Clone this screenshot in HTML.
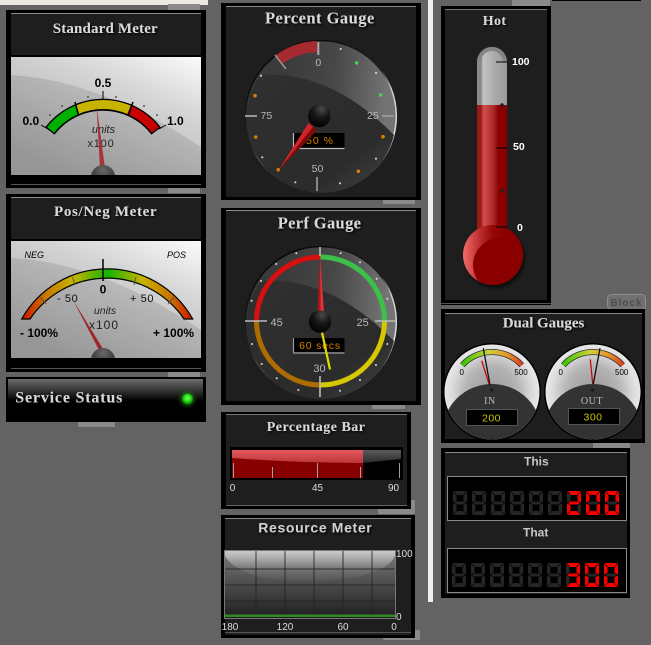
<!DOCTYPE html>
<html><head><meta charset="utf-8"><title>Gauges</title>
<style>
html,body{margin:0;padding:0;background:#636363;width:651px;height:645px;overflow:hidden}
svg{display:block}
.t{font-family:"Liberation Serif",serif;font-weight:bold;fill:#d8d8d8;filter:url(#sh)}
.a{font-family:"Liberation Sans",sans-serif}
.b{font-family:"Liberation Sans",sans-serif;font-weight:bold}
</style></head><body>
<svg width="651" height="645" viewBox="0 0 651 645" xmlns="http://www.w3.org/2000/svg">
<defs>
<filter id="sh" x="-10%" y="-30%" width="125%" height="180%"><feDropShadow dx="1.5" dy="1.5" stdDeviation="1" flood-color="#000" flood-opacity=".9"/></filter>
<filter id="bl" x="-30%" y="-30%" width="160%" height="160%"><feGaussianBlur stdDeviation="1.5"/></filter>
<linearGradient id="mbg" x1="1" y1="0" x2="0.3" y2="1"><stop offset="0" stop-color="#fbfbfb"/><stop offset=".35" stop-color="#d6d6d6"/><stop offset="1" stop-color="#a8a8a8"/></linearGradient>
<linearGradient id="pn" gradientUnits="userSpaceOnUse" x1="22" y1="0" x2="193" y2="0"><stop offset="0" stop-color="#cc1500"/><stop offset=".14" stop-color="#c87800"/><stop offset=".3" stop-color="#c8b400"/><stop offset=".5" stop-color="#10b400"/><stop offset=".7" stop-color="#c8b400"/><stop offset=".86" stop-color="#c87800"/><stop offset="1" stop-color="#cc1500"/></linearGradient>
<radialGradient id="dome" cx=".5" cy=".2" r=".7"><stop offset="0" stop-color="#666"/><stop offset="1" stop-color="#2c2c2c"/></radialGradient>
<linearGradient id="dial" x1=".95" y1=".25" x2=".25" y2=".2"><stop offset="0" stop-color="#747474"/><stop offset=".5" stop-color="#484848"/><stop offset="1" stop-color="#3a3a3a"/></linearGradient>
<linearGradient id="shade" x1="0" y1="0" x2="1" y2="1"><stop offset="0" stop-color="#303030"/><stop offset=".7" stop-color="#2b2b2b"/><stop offset="1" stop-color="#444"/></linearGradient>
<radialGradient id="knob" cx=".6" cy=".2" r=".85"><stop offset="0" stop-color="#4a4a4a"/><stop offset=".45" stop-color="#161616"/><stop offset="1" stop-color="#000"/></radialGradient>
<linearGradient id="rim" x1=".1" y1="0" x2=".7" y2="1"><stop offset="0" stop-color="#000"/><stop offset=".5" stop-color="#222"/><stop offset=".62" stop-color="#ccc"/><stop offset="1" stop-color="#eee"/></linearGradient>
<linearGradient id="stat" x1="0" y1="0" x2="0" y2="1"><stop offset="0" stop-color="#6e6e6e"/><stop offset=".15" stop-color="#5c5c5c"/><stop offset="1" stop-color="#000"/></linearGradient>
<radialGradient id="led" cx=".5" cy=".42" r=".55"><stop offset="0" stop-color="#8dff70"/><stop offset=".55" stop-color="#22e012"/><stop offset="1" stop-color="#0c7a08"/></radialGradient>
<linearGradient id="barhi" x1="0" y1="0" x2="0" y2="1"><stop offset="0" stop-color="#e5595f"/><stop offset="1" stop-color="#bc363a"/></linearGradient>
<linearGradient id="barhd" x1="0" y1="0" x2="0" y2="1"><stop offset="0" stop-color="#5c5c5c"/><stop offset="1" stop-color="#2a2a2a"/></linearGradient>
<linearGradient id="chart" x1="0" y1="0" x2="0" y2="1"><stop offset="0" stop-color="#7c7c7c"/><stop offset=".5" stop-color="#4c4c4c"/><stop offset="1" stop-color="#202020"/></linearGradient>
<linearGradient id="sheen" x1="0" y1="0" x2="0" y2="1"><stop offset="0" stop-color="#fff" stop-opacity=".6"/><stop offset=".6" stop-color="#fff" stop-opacity=".12"/><stop offset="1" stop-color="#fff" stop-opacity=".02"/></linearGradient>
<linearGradient id="tgl" x1="0" y1="0" x2="1" y2="0"><stop offset="0" stop-color="#8a8a8a"/><stop offset=".14" stop-color="#8a8a8a"/><stop offset=".2" stop-color="#c4c4c4"/><stop offset=".6" stop-color="#aaa"/><stop offset="1" stop-color="#9a9a9a"/></linearGradient>
<linearGradient id="tred" x1="0" y1="0" x2="1" y2="0"><stop offset="0" stop-color="#951616"/><stop offset=".14" stop-color="#a01c1c"/><stop offset=".22" stop-color="#cf4f4f"/><stop offset=".55" stop-color="#ac2828"/><stop offset=".72" stop-color="#8a0000"/><stop offset="1" stop-color="#8a0000"/></linearGradient>
<linearGradient id="bulb" x1="0" y1=".3" x2=".7" y2=".3"><stop offset="0" stop-color="#f26a6a"/><stop offset=".35" stop-color="#c43636"/><stop offset=".7" stop-color="#960808"/><stop offset="1" stop-color="#8a0000"/></linearGradient>
<radialGradient id="dd" cx=".5" cy=".5" r=".5"><stop offset="0" stop-color="#9a9a9a"/><stop offset=".55" stop-color="#b4b4b4"/><stop offset=".85" stop-color="#dcdcdc"/><stop offset="1" stop-color="#e8e8e8"/></radialGradient>
<linearGradient id="db" x1="0" y1="0" x2="1" y2="0"><stop offset="0" stop-color="#36c800"/><stop offset=".45" stop-color="#cfd03a"/><stop offset=".75" stop-color="#e8982a"/><stop offset="1" stop-color="#d8401e"/></linearGradient>
<clipPath id="c1"><rect x="11" y="57" width="190" height="118"/></clipPath>
<clipPath id="c2"><rect x="11" y="241" width="190" height="117"/></clipPath>
<clipPath id="cd1"><circle cx="492" cy="392" r="47.5"/></clipPath>
<clipPath id="cd2"><circle cx="593" cy="392" r="47.5"/></clipPath>
<clipPath id="cb"><circle cx="493" cy="255" r="30"/></clipPath>
<clipPath id="cc"><rect x="225" y="551" width="170" height="66"/></clipPath>
</defs>

<rect width="651" height="645" fill="#636363"/>
<rect x="0" y="0" width="208" height="5" fill="#ece9e4"/>
<rect x="428" y="0" width="5" height="602" fill="#efeeea"/>
<rect x="552" y="0" width="89" height="1" fill="#000"/>

<!-- Block tabs -->
<g fill="#8a8a8a">
<rect x="168" y="4" width="32" height="8"/><rect x="168" y="186" width="32" height="7"/><rect x="168" y="368" width="32" height="9"/>
<rect x="78" y="420" width="37" height="7"/><rect x="383" y="198" width="32" height="6"/><rect x="372" y="403" width="33" height="6"/>
<rect x="378" y="500" width="37" height="14" rx="2"/><rect x="383" y="630" width="37" height="10" rx="2"/>
<rect x="512" y="0" width="38" height="6"/><rect x="593" y="441" width="37" height="7"/>
</g>
<rect x="607.5" y="294.5" width="38" height="15" rx="4" fill="#707070" stroke="#8e8e8e"/>
<text x="626.5" y="306" text-anchor="middle" class="b" font-size="10" letter-spacing="1" fill="#4c4c4c">Block</text>

<!-- Standard Meter -->
<rect x="6" y="10" width="200" height="178" fill="#000"/>
<rect x="11" y="13" width="190" height="42" fill="#1e1e1e"/>
<rect x="11" y="13" width="190" height="1" fill="#8a8a8a"/>
<rect x="11" y="184" width="190" height="1" fill="#555"/>
<text x="52.7" y="33" class="t" font-size="15" textLength="105">Standard Meter</text>
<g clip-path="url(#c1)">
<rect x="11" y="57" width="190" height="118" fill="url(#mbg)"/>
<path d="M11 75Q100 80 201 147V175H11Z" fill="#000" opacity=".1"/>
<g fill="none">
<path d="M49.8 131A67 67 0 0 1 156.2 131" stroke="#000" stroke-width="12"/>
<path d="M50.6 130A66.5 66.5 0 0 1 77 109.8" stroke="#00b000" stroke-width="9"/>
<path d="M77 109.8A66.5 66.5 0 0 1 129 109.8" stroke="#c8b400" stroke-width="9"/>
<path d="M129 109.8A66.5 66.5 0 0 1 155.4 130" stroke="#c80000" stroke-width="9"/>
<path d="M75 102L78.5 115M133 102L128.5 115" stroke="#000" stroke-width="1.5"/>
<path d="M103 91V100M41 125L48 129M166 125L159 129" stroke="#000" stroke-width="1"/>
</g>
<g fill="#555"><circle cx="50" cy="115" r="1"/><circle cx="62" cy="106" r="1"/><circle cx="88" cy="97" r="1"/><circle cx="116" cy="97" r="1"/><circle cx="144" cy="106" r="1"/><circle cx="157" cy="115" r="1"/></g>
<text x="103" y="87" text-anchor="middle" class="b" font-size="12" fill="#000">0.5</text>
<text x="22.5" y="125" class="b" font-size="12" fill="#000">0.0</text>
<text x="167" y="125" class="b" font-size="12" fill="#000">1.0</text>
<text x="103.5" y="133" text-anchor="middle" class="a" font-size="11" font-style="italic" fill="#222">units</text>
<text x="101" y="147" text-anchor="middle" class="a" font-size="11" letter-spacing=".8" fill="#222">x100</text>
<path d="M96.5 105L100 168H105Z" fill="#a8343a"/>
<circle cx="103" cy="177" r="12" fill="url(#dome)"/>
</g>

<!-- Pos/Neg Meter -->
<rect x="6" y="194" width="200" height="178" fill="#000"/>
<rect x="11" y="197" width="190" height="42" fill="#1e1e1e"/>
<rect x="11" y="197" width="190" height="1" fill="#8a8a8a"/>
<rect x="11" y="368" width="190" height="1" fill="#555"/>
<text x="54" y="216" class="t" font-size="15" textLength="102.7">Pos/Neg Meter</text>
<g clip-path="url(#c2)">
<rect x="11" y="241" width="190" height="117" fill="url(#mbg)"/>
<path d="M11 258Q100 262 201 330V358H11Z" fill="#000" opacity=".1"/>
<path d="M21.7 319A98 98 0 0 1 192.7 319L184 319A93 93 0 0 0 30 319Z" fill="url(#pn)" stroke="#000" stroke-width="1.2"/>
<path d="M103 259V281" stroke="#000" stroke-width="1.5"/>
<path d="M72.5 277L75 285M136 277L134 285M40 297L46 304M174 297L168 304" stroke="#555" stroke-width="1"/>
<text x="24.5" y="258" class="a" font-size="9" font-style="italic" fill="#000">NEG</text>
<text x="167" y="258" class="a" font-size="9" font-style="italic" fill="#000">POS</text>
<text x="103" y="293.5" text-anchor="middle" class="b" font-size="12" fill="#000">0</text>
<text x="57" y="302" class="a" font-size="11" letter-spacing=".6" fill="#111">- 50</text>
<text x="130" y="302" class="a" font-size="11" letter-spacing=".6" fill="#111">+ 50</text>
<text x="105" y="314" text-anchor="middle" class="a" font-size="10.5" font-style="italic" fill="#222">units</text>
<text x="104" y="329" text-anchor="middle" class="a" font-size="12" letter-spacing="1" fill="#222">x100</text>
<text x="20" y="337" class="b" font-size="12" fill="#000">- 100%</text>
<text x="153" y="337" class="b" font-size="12" fill="#000">+ 100%</text>
<path d="M73 300L99 350L102.5 348Z" fill="#a02428"/>
<circle cx="103" cy="360" r="12" fill="url(#dome)"/>
</g>

<!-- Service Status -->
<rect x="6" y="377" width="200" height="45" fill="#000"/>
<rect x="8" y="379" width="195" height="22" fill="url(#stat)"/>
<text x="15.3" y="402.7" class="t" font-size="16" textLength="107">Service Status</text>
<circle cx="187.5" cy="399" r="7.5" fill="#1c8a10" opacity=".55" filter="url(#bl)"/>
<circle cx="187.5" cy="399" r="5.5" fill="url(#led)"/>

<!-- Percent Gauge -->
<rect x="221" y="3" width="200" height="197" fill="#000"/>
<rect x="226" y="6" width="190" height="191" fill="#1e1e1e"/>
<rect x="226" y="6" width="190" height="1" fill="#8a8a8a"/>
<text x="265" y="23.3" class="t" font-size="16.5" textLength="109.3">Percent Gauge</text>
<circle cx="320.8" cy="116" r="75.5" fill="url(#dial)" stroke="url(#rim)" stroke-width="1.5"/>
<path d="M261 75Q330 70 394 135A75 75 0 0 1 246 116A75 75 0 0 1 261 75Z" fill="url(#shade)"/>
<path d="M279.1 59.4A69.5 69.5 0 0 1 317 46.5" fill="none" stroke="#a62a30" stroke-width="11"/>
<path d="M275 55L286 69" stroke="#999" stroke-width="1.5"/>
<path d="M318.3 42V55" stroke="#aaa" stroke-width="2"/>
<path d="M245 116H257M382 116H394" stroke="#999" stroke-width="2"/>
<path d="M317 177V191" stroke="#888" stroke-width="2"/>
<g fill="#ccc"><circle cx="340.7" cy="49" r="1.1"/><circle cx="376" cy="73" r="1.1"/><circle cx="376" cy="158.7" r="1.1"/><circle cx="340" cy="183.3" r="1.1"/><circle cx="295.3" cy="182.3" r="1.1"/><circle cx="262.3" cy="157.3" r="1.1"/><circle cx="261" cy="75.7" r="1.1"/></g>
<g fill="#44d84a"><circle cx="356.7" cy="63" r="1.7"/><circle cx="380.7" cy="95" r="1.7"/></g>
<g fill="#d88000"><circle cx="383" cy="136.7" r="1.8"/><circle cx="358.3" cy="171.3" r="1.8"/><circle cx="278.3" cy="169.7" r="1.8"/><circle cx="255.7" cy="137" r="1.8"/><circle cx="255" cy="95.7" r="1.8"/></g>
<text x="318.3" y="66" text-anchor="middle" class="a" font-size="10.5" fill="#b8b8b8">0</text>
<text x="260.5" y="119" class="a" font-size="10.5" fill="#b8b8b8">75</text>
<text x="367" y="119" class="a" font-size="10.5" fill="#b8b8b8">25</text>
<text x="317.5" y="172" text-anchor="middle" class="a" font-size="10.5" fill="#b8b8b8">50</text>
<rect x="293.5" y="133" width="51" height="15" fill="#000"/>
<path d="M293.5 133V148.5H344.5" fill="none" stroke="#bbb" stroke-width="1.2"/>
<text x="320" y="144" text-anchor="middle" class="a" font-size="10.5" letter-spacing="1" fill="#d88000">50 %</text>
<path d="M278 171L308.5 123L313 127Z" fill="#d42228"/>
<path d="M278 171L313 127L317.5 130Z" fill="#7a0c0c"/>
<circle cx="319.3" cy="116" r="11.2" fill="url(#knob)"/>

<!-- Perf Gauge -->
<rect x="221" y="208" width="200" height="197" fill="#000"/>
<rect x="226" y="210" width="190" height="191" fill="#1e1e1e"/>
<rect x="226" y="210" width="190" height="1" fill="#8a8a8a"/>
<text x="277.7" y="228.3" class="t" font-size="16.5" textLength="83.3">Perf Gauge</text>
<circle cx="320.8" cy="322" r="75.5" fill="url(#dial)" stroke="url(#rim)" stroke-width="1.5"/>
<path d="M261 281Q330 276 394 341A75 75 0 0 1 246 322A75 75 0 0 1 261 281Z" fill="url(#shade)"/>
<g fill="none" stroke-width="5">
<path d="M256.5 321A64 64 0 0 1 320.5 257" stroke="#d80f0f"/>
<path d="M320.5 257A64 64 0 0 1 384.5 321" stroke="#3dc04a"/>
<path d="M384.5 321A64 64 0 0 1 320.5 385" stroke="#d6c800"/>
<path d="M320.5 385A64 64 0 0 1 256.5 321" stroke="#ac6c00"/>
</g>
<path d="M245 321H267M375 321H396M320 247V256M320 376V397" stroke="#bbb" stroke-width="1.6"/>
<g fill="#ddd"><circle cx="296.3" cy="253.3" r="1"/><circle cx="276.3" cy="264" r="1"/><circle cx="261" cy="281" r="1"/><circle cx="251.7" cy="300.7" r="1"/><circle cx="252" cy="344" r="1"/><circle cx="261.7" cy="364" r="1"/><circle cx="276.7" cy="378.3" r="1"/><circle cx="298.3" cy="390" r="1"/><circle cx="340" cy="390.7" r="1"/><circle cx="360" cy="380" r="1"/><circle cx="376" cy="365" r="1"/><circle cx="387.3" cy="344" r="1"/><circle cx="387.3" cy="298.7" r="1"/><circle cx="376.7" cy="278.7" r="1"/><circle cx="360" cy="262.3" r="1"/><circle cx="340.7" cy="253.3" r="1"/></g>
<text x="270.5" y="326" class="a" font-size="11" fill="#b8b8b8">45</text>
<text x="356.5" y="326" class="a" font-size="11" fill="#b8b8b8">25</text>
<text x="319.5" y="372" text-anchor="middle" class="a" font-size="11" fill="#b8b8b8">30</text>
<rect x="293.5" y="338" width="51" height="14" fill="#000"/>
<path d="M293.5 338V353H344.5" fill="none" stroke="#999" stroke-width="1.2"/>
<text x="320" y="349" text-anchor="middle" class="a" font-size="10.5" letter-spacing=".8" fill="#d88000">60 secs</text>
<path d="M320 255L317.5 312H320.5Z" fill="#a81818"/>
<path d="M320 255L320.5 312H324Z" fill="#e03038"/>
<path d="M321.7 331L330 369.5" stroke="#dcdc00" stroke-width="2.2"/>
<circle cx="320" cy="321.7" r="11.2" fill="url(#knob)"/>

<!-- Percentage Bar -->
<rect x="221" y="412" width="190" height="97" fill="#000"/>
<rect x="226" y="414" width="181" height="91" fill="#1e1e1e"/>
<rect x="226" y="414" width="181" height="1" fill="#777"/>
<rect x="226" y="505" width="181" height="1" fill="#666"/>
<text x="266.7" y="431" class="t" font-size="14" textLength="98.3">Percentage Bar</text>
<rect x="230" y="447" width="173" height="33" fill="#000"/>
<rect x="232" y="450" width="131" height="28" fill="#860000"/>
<path d="M232 450H363V463Q300 463 232 458Z" fill="url(#barhi)"/>
<path d="M363 450H401V459Q380 461 363 463Z" fill="url(#barhd)"/>
<path d="M233.5 463V478M272.5 467V478M317.5 463V478M360.5 467V478M399.5 463V478" stroke="#a0a0a0" stroke-width="1"/>
<text x="232.5" y="491" text-anchor="middle" class="a" font-size="10" fill="#ddd">0</text>
<text x="317.5" y="491" text-anchor="middle" class="a" font-size="10" fill="#ddd">45</text>
<text x="393.5" y="491" text-anchor="middle" class="a" font-size="10" fill="#ddd">90</text>

<!-- Resource Meter -->
<rect x="221" y="515" width="194" height="123" fill="#000"/>
<rect x="225" y="518" width="186" height="117" fill="#1e1e1e"/>
<rect x="225" y="518" width="186" height="1" fill="#888"/>
<rect x="225" y="632" width="186" height="1" fill="#555"/>
<text x="258.3" y="532.7" class="b" font-size="14" fill="#cfcfcf" filter="url(#sh)" textLength="113.4">Resource Meter</text>
<rect x="224.5" y="550.5" width="171" height="68" fill="none" stroke="#777"/>
<g clip-path="url(#cc)">
<rect x="225" y="551" width="170" height="66" fill="url(#chart)"/>
<path d="M225 551H395V556Q388 572 345 579Q310 583 270 579Q234 572 225 556Z" fill="url(#sheen)"/>
<path d="M256 551V617M285 551V617M314 551V617M343 551V617M372 551V617M225 569H395M225 585H395M225 601H395" stroke="#222" stroke-width="1" opacity=".85"/>
<rect x="225" y="614.5" width="170" height="2.5" fill="#2f8a22"/>
</g>
<text x="396" y="557" class="a" font-size="10" fill="#ddd">100</text>
<text x="396" y="620" class="a" font-size="10" fill="#ddd">0</text>
<text x="230" y="630" text-anchor="middle" class="a" font-size="10" fill="#ddd">180</text>
<text x="285" y="630" text-anchor="middle" class="a" font-size="10" fill="#ddd">120</text>
<text x="343" y="630" text-anchor="middle" class="a" font-size="10" fill="#ddd">60</text>
<text x="394" y="630" text-anchor="middle" class="a" font-size="10" fill="#ddd">0</text>

<!-- Hot -->
<rect x="441" y="6" width="110" height="299" fill="#000"/>
<rect x="445" y="9" width="102" height="291" fill="#1e1e1e"/>
<rect x="445" y="9" width="102" height="1" fill="#777"/>
<rect x="441" y="303" width="110" height="1" fill="#555"/>
<text x="482.7" y="25" class="t" font-size="14" textLength="23.3">Hot</text>
<path d="M477 105V62A15 15 0 0 1 507 62V105Z" fill="url(#tgl)"/>
<path d="M477 62A15 15 0 0 1 507 62L503 62A11 11 0 0 0 481 62Z" fill="#858585"/>
<rect x="477" y="105" width="30" height="130" fill="url(#tred)"/>
<circle cx="495" cy="258" r="30" fill="#000" opacity=".6" filter="url(#bl)"/>
<circle cx="493" cy="255" r="30" fill="url(#bulb)"/>
<g clip-path="url(#cb)"><circle cx="500" cy="265" r="27" fill="#8a0000"/></g>
<path d="M496 62H507M496 148H507M496 227H507" stroke="#000" stroke-width="1"/>
<circle cx="502" cy="105" r="1.8" fill="#222"/><circle cx="502" cy="191" r="1.8" fill="#222"/>
<text x="512" y="65" class="b" font-size="10.5" fill="#fff">100</text>
<text x="513" y="150" class="b" font-size="10.5" fill="#fff">50</text>
<text x="517" y="231" class="b" font-size="10.5" fill="#fff">0</text>

<!-- Dual Gauges -->
<rect x="441" y="309" width="204" height="134" fill="#000"/>
<rect x="445" y="313" width="197" height="126" fill="#1e1e1e"/>
<rect x="445" y="313" width="197" height="1" fill="#888"/>
<text x="502.7" y="327.7" class="t" font-size="15" textLength="81.6">Dual Gauges</text>
<g>
<circle cx="492" cy="392" r="49" fill="#000"/>
<circle cx="492" cy="392" r="47.5" fill="url(#dd)"/>
<g clip-path="url(#cd1)"><circle cx="492" cy="434" r="50" fill="#333"/></g>
<path d="M462.3 365.2A40 40 0 0 1 521.7 365.2" fill="none" stroke="#333" stroke-width="6"/>
<path d="M462.3 365.2A40 40 0 0 1 521.7 365.2" fill="none" stroke="url(#db)" stroke-width="4.4"/>
<text x="461.7" y="375" text-anchor="middle" class="a" font-size="8" fill="#000">0</text>
<text x="521" y="375" text-anchor="middle" class="a" font-size="8" fill="#000">500</text>
<path d="M481.7 360.7L489.3 385" stroke="#c00" stroke-width="1.2"/>
<path d="M483.3 348.3L490 385" stroke="#111" stroke-width="1.3"/>
<circle cx="491.7" cy="390" r="1.6" fill="#1a1a1a"/>
<text x="490" y="404" text-anchor="middle" font-family="Liberation Serif,serif" font-size="10" letter-spacing=".6" fill="#bbb">IN</text>
<rect x="466.5" y="409.5" width="51" height="16" fill="#000" stroke="#555"/>
<text x="491.5" y="421.5" text-anchor="middle" class="a" font-size="10.5" letter-spacing=".5" fill="#c8c800">200</text>
</g>
<g>
<circle cx="593" cy="392" r="49" fill="#000"/>
<circle cx="593" cy="392" r="47.5" fill="url(#dd)"/>
<g clip-path="url(#cd2)"><circle cx="593" cy="434" r="50" fill="#333"/></g>
<path d="M563.3 365.2A40 40 0 0 1 622.7 365.2" fill="none" stroke="#333" stroke-width="6"/>
<path d="M563.3 365.2A40 40 0 0 1 622.7 365.2" fill="none" stroke="url(#db)" stroke-width="4.4"/>
<text x="560.7" y="375" text-anchor="middle" class="a" font-size="8" fill="#000">0</text>
<text x="621.7" y="375" text-anchor="middle" class="a" font-size="8" fill="#000">500</text>
<path d="M590.3 359.3L592.7 384" stroke="#c00" stroke-width="1.2"/>
<path d="M600 348.3L593.3 384" stroke="#111" stroke-width="1.3"/>
<circle cx="592.5" cy="390" r="1.6" fill="#1a1a1a"/>
<text x="592" y="404" text-anchor="middle" font-family="Liberation Serif,serif" font-size="10" letter-spacing=".6" fill="#bbb">OUT</text>
<rect x="568.5" y="408.5" width="51" height="16" fill="#000" stroke="#555"/>
<text x="593" y="420.5" text-anchor="middle" class="a" font-size="10.5" letter-spacing=".5" fill="#c8c800">300</text>
</g>

<!-- This / That -->
<rect x="441" y="448" width="189" height="150" fill="#000"/>
<rect x="445" y="452" width="182" height="142" fill="#1e1e1e"/>
<rect x="445" y="452" width="182" height="1" fill="#888"/>
<text x="524" y="465.7" class="b" font-size="12" fill="#c8c8c8">This</text>
<text x="523" y="536.7" class="b" font-size="12" fill="#c8c8c8">That</text>
<rect x="447.5" y="476.5" width="179" height="44" fill="#000" stroke="#888"/>
<rect x="447.5" y="548.5" width="179" height="44" fill="#000" stroke="#888"/>
<g fill="#262626">
<path transform="translate(453,491)" d="M.5 0H13.5L10 4H4ZM14 .5V11.5L10.5 10V4.5ZM14 12.5V23.5L10.5 20V14ZM13.5 24H.5L4 20H10ZM0 23.5V12.5L3.5 14V20ZM0 11.5V.5L3.5 4.5V10ZM1 12L3.5 10.5H10.5L13 12L10.5 13.5H3.5Z"/>
<path transform="translate(472,491)" d="M.5 0H13.5L10 4H4ZM14 .5V11.5L10.5 10V4.5ZM14 12.5V23.5L10.5 20V14ZM13.5 24H.5L4 20H10ZM0 23.5V12.5L3.5 14V20ZM0 11.5V.5L3.5 4.5V10ZM1 12L3.5 10.5H10.5L13 12L10.5 13.5H3.5Z"/>
<path transform="translate(491,491)" d="M.5 0H13.5L10 4H4ZM14 .5V11.5L10.5 10V4.5ZM14 12.5V23.5L10.5 20V14ZM13.5 24H.5L4 20H10ZM0 23.5V12.5L3.5 14V20ZM0 11.5V.5L3.5 4.5V10ZM1 12L3.5 10.5H10.5L13 12L10.5 13.5H3.5Z"/>
<path transform="translate(510,491)" d="M.5 0H13.5L10 4H4ZM14 .5V11.5L10.5 10V4.5ZM14 12.5V23.5L10.5 20V14ZM13.5 24H.5L4 20H10ZM0 23.5V12.5L3.5 14V20ZM0 11.5V.5L3.5 4.5V10ZM1 12L3.5 10.5H10.5L13 12L10.5 13.5H3.5Z"/>
<path transform="translate(529,491)" d="M.5 0H13.5L10 4H4ZM14 .5V11.5L10.5 10V4.5ZM14 12.5V23.5L10.5 20V14ZM13.5 24H.5L4 20H10ZM0 23.5V12.5L3.5 14V20ZM0 11.5V.5L3.5 4.5V10ZM1 12L3.5 10.5H10.5L13 12L10.5 13.5H3.5Z"/>
<path transform="translate(548,491)" d="M.5 0H13.5L10 4H4ZM14 .5V11.5L10.5 10V4.5ZM14 12.5V23.5L10.5 20V14ZM13.5 24H.5L4 20H10ZM0 23.5V12.5L3.5 14V20ZM0 11.5V.5L3.5 4.5V10ZM1 12L3.5 10.5H10.5L13 12L10.5 13.5H3.5Z"/>
<path transform="translate(567,491)" d="M14 12.5V23.5L10.5 20V14ZM0 11.5V.5L3.5 4.5V10Z"/>
<path transform="translate(586,491)" d="M1 12L3.5 10.5H10.5L13 12L10.5 13.5H3.5Z"/>
<path transform="translate(605,491)" d="M1 12L3.5 10.5H10.5L13 12L10.5 13.5H3.5Z"/>
<path transform="translate(452,563)" d="M.5 0H13.5L10 4H4ZM14 .5V11.5L10.5 10V4.5ZM14 12.5V23.5L10.5 20V14ZM13.5 24H.5L4 20H10ZM0 23.5V12.5L3.5 14V20ZM0 11.5V.5L3.5 4.5V10ZM1 12L3.5 10.5H10.5L13 12L10.5 13.5H3.5Z"/>
<path transform="translate(471,563)" d="M.5 0H13.5L10 4H4ZM14 .5V11.5L10.5 10V4.5ZM14 12.5V23.5L10.5 20V14ZM13.5 24H.5L4 20H10ZM0 23.5V12.5L3.5 14V20ZM0 11.5V.5L3.5 4.5V10ZM1 12L3.5 10.5H10.5L13 12L10.5 13.5H3.5Z"/>
<path transform="translate(490,563)" d="M.5 0H13.5L10 4H4ZM14 .5V11.5L10.5 10V4.5ZM14 12.5V23.5L10.5 20V14ZM13.5 24H.5L4 20H10ZM0 23.5V12.5L3.5 14V20ZM0 11.5V.5L3.5 4.5V10ZM1 12L3.5 10.5H10.5L13 12L10.5 13.5H3.5Z"/>
<path transform="translate(509,563)" d="M.5 0H13.5L10 4H4ZM14 .5V11.5L10.5 10V4.5ZM14 12.5V23.5L10.5 20V14ZM13.5 24H.5L4 20H10ZM0 23.5V12.5L3.5 14V20ZM0 11.5V.5L3.5 4.5V10ZM1 12L3.5 10.5H10.5L13 12L10.5 13.5H3.5Z"/>
<path transform="translate(528,563)" d="M.5 0H13.5L10 4H4ZM14 .5V11.5L10.5 10V4.5ZM14 12.5V23.5L10.5 20V14ZM13.5 24H.5L4 20H10ZM0 23.5V12.5L3.5 14V20ZM0 11.5V.5L3.5 4.5V10ZM1 12L3.5 10.5H10.5L13 12L10.5 13.5H3.5Z"/>
<path transform="translate(547,563)" d="M.5 0H13.5L10 4H4ZM14 .5V11.5L10.5 10V4.5ZM14 12.5V23.5L10.5 20V14ZM13.5 24H.5L4 20H10ZM0 23.5V12.5L3.5 14V20ZM0 11.5V.5L3.5 4.5V10ZM1 12L3.5 10.5H10.5L13 12L10.5 13.5H3.5Z"/>
<path transform="translate(566,563)" d="M0 23.5V12.5L3.5 14V20ZM0 11.5V.5L3.5 4.5V10Z"/>
<path transform="translate(585,563)" d="M1 12L3.5 10.5H10.5L13 12L10.5 13.5H3.5Z"/>
<path transform="translate(604,563)" d="M1 12L3.5 10.5H10.5L13 12L10.5 13.5H3.5Z"/>
</g>
<g fill="#f60000">
<g><title>200</title>
<path transform="translate(567,491)" d="M.5 0H13.5L10 4H4ZM14 .5V11.5L10.5 10V4.5ZM13.5 24H.5L4 20H10ZM0 23.5V12.5L3.5 14V20ZM1 12L3.5 10.5H10.5L13 12L10.5 13.5H3.5Z"/>
<path transform="translate(586,491)" d="M.5 0H13.5L10 4H4ZM14 .5V11.5L10.5 10V4.5ZM14 12.5V23.5L10.5 20V14ZM13.5 24H.5L4 20H10ZM0 23.5V12.5L3.5 14V20ZM0 11.5V.5L3.5 4.5V10Z"/>
<path transform="translate(605,491)" d="M.5 0H13.5L10 4H4ZM14 .5V11.5L10.5 10V4.5ZM14 12.5V23.5L10.5 20V14ZM13.5 24H.5L4 20H10ZM0 23.5V12.5L3.5 14V20ZM0 11.5V.5L3.5 4.5V10Z"/>
</g>
<g><title>300</title>
<path transform="translate(566,563)" d="M.5 0H13.5L10 4H4ZM14 .5V11.5L10.5 10V4.5ZM14 12.5V23.5L10.5 20V14ZM13.5 24H.5L4 20H10ZM1 12L3.5 10.5H10.5L13 12L10.5 13.5H3.5Z"/>
<path transform="translate(585,563)" d="M.5 0H13.5L10 4H4ZM14 .5V11.5L10.5 10V4.5ZM14 12.5V23.5L10.5 20V14ZM13.5 24H.5L4 20H10ZM0 23.5V12.5L3.5 14V20ZM0 11.5V.5L3.5 4.5V10Z"/>
<path transform="translate(604,563)" d="M.5 0H13.5L10 4H4ZM14 .5V11.5L10.5 10V4.5ZM14 12.5V23.5L10.5 20V14ZM13.5 24H.5L4 20H10ZM0 23.5V12.5L3.5 14V20ZM0 11.5V.5L3.5 4.5V10Z"/>
</g>
</g>
</svg>
</body></html>
